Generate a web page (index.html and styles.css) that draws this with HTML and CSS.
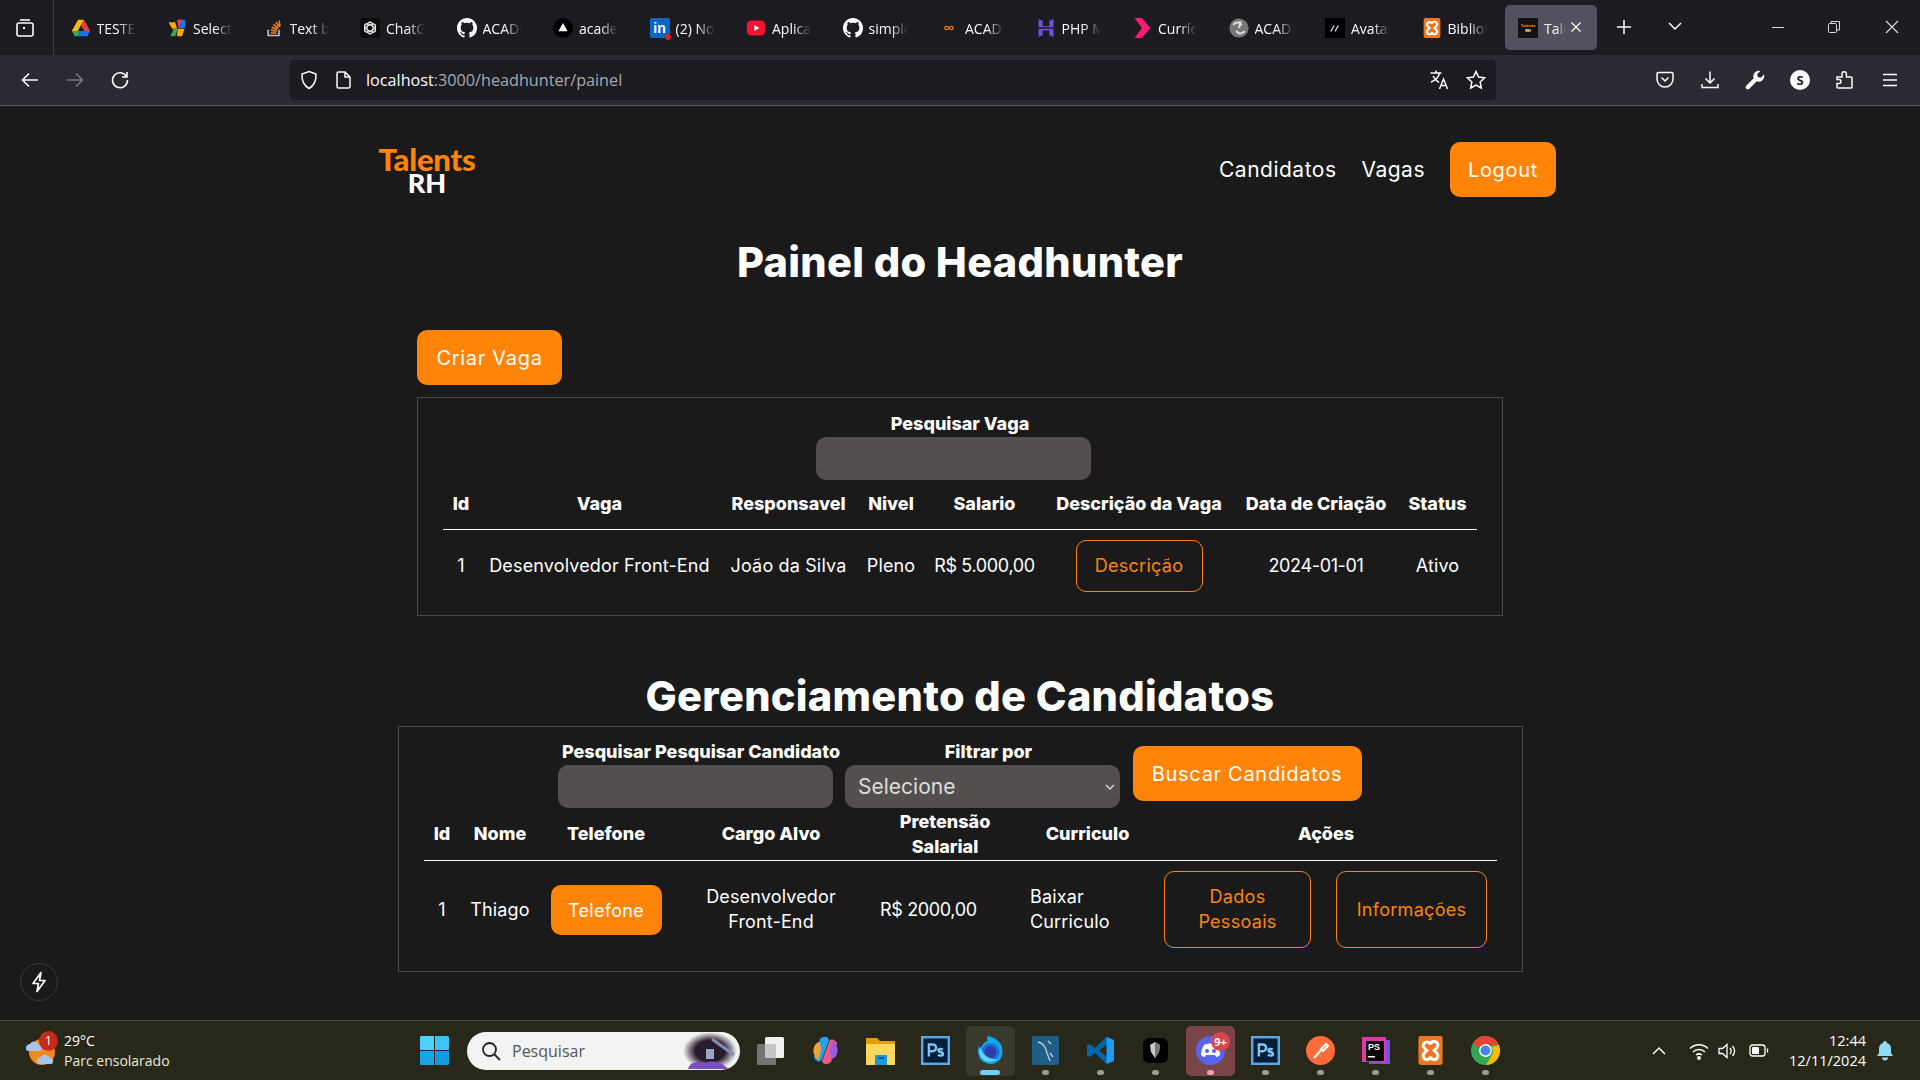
FILE: index.html
```html
<!DOCTYPE html>
<html lang="pt-BR">
<head>
<meta charset="utf-8">
<title>Talents RH</title>
<link rel="stylesheet" href="styles.css">
</head>
<body>
<svg class="sprite" xmlns="http://www.w3.org/2000/svg">
  <symbol id="gh" viewBox="0 0 16 16"><path fill="#fff" d="M8 0C3.58 0 0 3.58 0 8c0 3.54 2.29 6.53 5.47 7.59.4.07.55-.17.55-.38 0-.19-.01-.82-.01-1.49-2.01.37-2.53-.49-2.69-.94-.09-.23-.48-.94-.82-1.13-.28-.15-.68-.52-.01-.53.63-.01 1.08.58 1.23.82.72 1.21 1.87.87 2.33.66.07-.52.28-.87.51-1.07-1.78-.2-3.64-.89-3.64-3.95 0-.87.31-1.59.82-2.15-.08-.2-.36-1.02.08-2.12 0 0 .67-.21 2.2.82.64-.18 1.32-.27 2-.27s1.36.09 2 .27c1.53-1.04 2.2-.82 2.2-.82.44 1.1.16 1.92.08 2.12.51.56.82 1.27.82 2.15 0 3.07-1.87 3.75-3.65 3.95.29.25.54.73.54 1.48 0 1.07-.01 1.93-.01 2.2 0 .21.15.46.55.38A8.01 8.01 0 0 0 16 8c0-4.42-3.58-8-8-8z"/></symbol>
  <symbol id="ps" viewBox="0 0 24 24"><rect x="1" y="1" width="22" height="22" fill="#001e36" stroke="#5aa9e6" stroke-width="2"/><path fill="none" stroke="#7fc4f5" stroke-width="2" d="M6.5 17V7h3.2a2.7 2.7 0 0 1 0 5.6H6.5M18 11.3c-1-.8-3.6-.9-3.6.6 0 1.700 3.800 1 3.800 3 0 1.700-2.800 1.600-4.100.7"/></symbol>
</svg>

<header class="tabbar">
  <div class="tabmenu">
    <svg width="20" height="20" viewBox="0 0 20 20" fill="none" stroke="#fbfbfe" stroke-width="1.6"><rect x="2" y="5" width="16" height="13" rx="2"/><path d="M5 2h10"/><rect x="8" y="9" width="2" height="2" fill="#fbfbfe" stroke="none"/></svg>
  </div>
  <nav class="tabs">
    <div class="tab"><svg class="fav" viewBox="0 0 24 24"><path fill="#fbbc04" d="M8.500 2h7L8 15.500H1z"/><path fill="#1a73e8" d="M8 22l3.500-6.500H23L19.500 22z"/><path fill="#ea4335" d="M15.500 2L23 15.500h-7L12 9z"/><path fill="#34a853" d="M1 15.500L4.500 22H8l3.500-6.500z"/></svg><span class="tab-title">TESTE Drive</span></div>
    <div class="tab"><svg class="fav" viewBox="0 0 24 24"><path fill="#f9ab00" d="M2 5h8l2 8H6z"/><path fill="#1a73e8" d="M14 2h8v10h-8z"/><path fill="#ea4335" d="M12 2h6l-4 10z"/><path fill="#34a853" d="M4 22l4-9h5l-3 9z"/><path fill="#f9ab00" d="M13 13h8l-3 9h-6z"/></svg><span class="tab-title">Select box</span></div>
    <div class="tab"><svg class="fav" viewBox="0 0 24 24"><path fill="none" stroke="#bcbbbb" stroke-width="2" d="M5 14v7h13v-7"/><path fill="none" stroke="#f48024" stroke-width="2" d="M8 18h7M8.300 14.500l7 1.400M9.300 11l6.600 2.900M11.300 7.700l5.600 4.600M14.300 5l4.200 5.700M18 3l1.300 7"/></svg><span class="tab-title">Text box</span></div>
    <div class="tab"><svg class="fav" viewBox="0 0 24 24"><rect width="24" height="24" rx="4" fill="#0c0c0c"/><g fill="none" stroke="#eee" stroke-width="1.200"><circle cx="12" cy="12" r="6.500"/><ellipse cx="12" cy="12" rx="7.500" ry="3.500" transform="rotate(30 12 12)"/><ellipse cx="12" cy="12" rx="7.500" ry="3.500" transform="rotate(90 12 12)"/><ellipse cx="12" cy="12" rx="7.500" ry="3.500" transform="rotate(150 12 12)"/></g></svg><span class="tab-title">ChatGPT</span></div>
    <div class="tab"><svg class="fav"><use href="#gh"/></svg><span class="tab-title">ACADEMIA</span></div>
    <div class="tab"><svg class="fav" viewBox="0 0 24 24"><circle cx="12" cy="12" r="12" fill="#000"/><path fill="#fff" d="M12 6l5.500 10h-11z"/></svg><span class="tab-title">academia</span></div>
    <div class="tab"><span class="fav li">in<i></i></span><span class="tab-title">(2) Notif</span></div>
    <div class="tab"><svg class="fav" viewBox="0 0 24 24"><rect x="1" y="3" width="22" height="18" rx="5" fill="#f5132f"/><path fill="#fff" d="M10 8.500l6 3.500-6 3.500z"/></svg><span class="tab-title">Aplicativo</span></div>
    <div class="tab"><svg class="fav"><use href="#gh"/></svg><span class="tab-title">simple</span></div>
    <div class="tab"><svg class="fav" viewBox="0 0 24 24"><path fill="none" stroke="#e8771c" stroke-width="1.600" d="M12 12c-1.200-2.500-5-2.500-5 0s3.800 2.500 5 0 5-2.500 5 0-3.800 2.500-5 0"/></svg><span class="tab-title">ACADEMIA</span></div>
    <div class="tab"><svg class="fav" viewBox="0 0 24 24"><path fill="#6f4fdc" d="M3 1l5 2.500V10h8V3.500L21 1v10H3zM3 13h18v10l-5-2.500V15H8v5.500L3 23z"/></svg><span class="tab-title">PHP Manual</span></div>
    <div class="tab"><svg class="fav" viewBox="0 0 24 24"><path fill="#ff1a75" d="M3 0h9l10 12-10 12H3l9-12z"/></svg><span class="tab-title">Currículo</span></div>
    <div class="tab"><svg class="fav" viewBox="0 0 24 24"><circle cx="12" cy="12" r="11.500" fill="#777"/><path fill="none" stroke="#ddd" stroke-width="2.500" d="M5 8c4-4 9-3 10 1M19 16c-4 4-9 3-10-1M12 12l2-8"/></svg><span class="tab-title">ACADEMIA</span></div>
    <div class="tab"><svg class="fav" viewBox="0 0 24 24"><rect width="24" height="24" fill="#000"/><path stroke="#ddd" stroke-width="1.500" d="M7 16l4-7M12 16l4-7"/></svg><span class="tab-title">Avatares</span></div>
    <div class="tab"><svg class="fav" viewBox="0 0 24 24"><rect x="2" width="20" height="24" rx="2" fill="#f0761f"/><path fill="none" stroke="#fff" stroke-width="2.500" d="M9 5a3 3 0 0 0-3 3c0 2 2 3 3 4-1 1-3 2-3 4a3 3 0 0 0 6 1 3 3 0 0 0 6-1c0-2-2-3-3-4 1-1 3-2 3-4a3 3 0 0 0-6-1 3 3 0 0 0-3-2z"/></svg><span class="tab-title">Biblioteca</span></div>
    <div class="tab active"><span class="fav mini"><b>Talents</b><b>RH</b></span><span class="tab-title short">Talents</span>
      <svg class="tab-x" width="12" height="12" viewBox="0 0 12 12" stroke="#fbfbfe" stroke-width="1.300"><path d="M1.500 1.500l9 9M10.500 1.500l-9 9"/></svg></div>
  </nav>
  <svg class="newtab" width="16" height="16" viewBox="0 0 16 16" stroke="#fbfbfe" stroke-width="1.500"><path d="M8 1v14M1 8h14"/></svg>
  <svg class="alltabs" width="14" height="9" viewBox="0 0 14 9" fill="none" stroke="#fbfbfe" stroke-width="1.500"><path d="M1 1l6 6 6-6"/></svg>
  <div class="winctl">
    <svg width="12" height="12" viewBox="0 0 12 12" stroke="#ddd"><path d="M0 6.500h12"/></svg>
    <svg width="12" height="12" viewBox="0 0 12 12" fill="none" stroke="#ddd"><rect x=".5" y="2.500" width="8" height="9" rx="1"/><path d="M3 2.500V.5h8.500v8.500H8.500"/></svg>
    <svg width="14" height="14" viewBox="0 0 14 14" stroke="#ddd" stroke-width="1.100"><path d="M1 1l12 12M13 1L1 13"/></svg>
  </div>
</header>

<div class="toolbar">
  <div class="navbtns">
    <svg width="20" height="20" viewBox="0 0 20 20" fill="none" stroke="#fbfbfe" stroke-width="1.600"><path d="M18 10H3M9 3.500L2.500 10 9 16.500"/></svg>
    <svg width="20" height="20" viewBox="0 0 20 20" fill="none" stroke="#77767c" stroke-width="1.600"><path d="M2 10h15M11 3.500l6.500 6.500-6.500 6.500"/></svg>
    <svg width="20" height="20" viewBox="0 0 20 20" fill="none" stroke="#fbfbfe" stroke-width="1.600"><path d="M16.500 6.500A7.500 7.500 0 1 0 17.500 10M17 2v5h-5"/></svg>
  </div>
  <div class="urlbar">
    <svg class="url-shield" width="18" height="20" viewBox="0 0 18 20" fill="none" stroke="#fbfbfe" stroke-width="1.500"><path d="M9 1.500l7 2.500c.3 6.500-1.500 11.500-7 14.500C3.500 15.500 1.700 10.500 2 4z"/></svg>
    <svg width="15" height="18" viewBox="0 0 15 18" fill="none" stroke="#fbfbfe" stroke-width="1.500"><path d="M2.500 1h6.500l5 5v9.500a1.500 1.500 0 0 1-1.500 1.500h-10A1.500 1.500 0 0 1 1 15.500v-13A1.500 1.500 0 0 1 2.500 1zM9 1v5h5"/></svg>
    <span class="url"><span class="url-host">localhost</span>:3000/headhunter/painel</span>
    <svg class="url-end" width="22" height="22" viewBox="0 0 22 22" fill="none" stroke="#fbfbfe" stroke-width="1.500"><path d="M1.500 4h11M7 1.500V4M10.500 4C9.500 8.500 6 11.500 2 13M4 7c1.500 3 3.500 5 6 6.500M10.500 20l4-10 4 10M12 16.500h5"/></svg>
    <svg width="20" height="20" viewBox="0 0 20 20" fill="none" stroke="#fbfbfe" stroke-width="1.500"><path d="M10 1.500l2.600 5.500 6 .8-4.400 4.200 1.100 6L10 15.100 4.700 18l1.100-6L1.400 7.800l6-.8z"/></svg>
  </div>
  <div class="tools">
    <svg width="20" height="20" viewBox="0 0 20 20" fill="none" stroke="#fbfbfe" stroke-width="1.500"><path d="M3.500 2.500h13A1.500 1.500 0 0 1 18 4v5a8 8 0 0 1-16 0V4a1.500 1.500 0 0 1 1.500-1.500zM6.500 7.500L10 11l3.500-3.500"/></svg>
    <svg width="20" height="20" viewBox="0 0 20 20" fill="none" stroke="#fbfbfe" stroke-width="1.500"><path d="M10 1.500V13M5.500 8.500L10 13l4.500-4.500M2 14v3.500h16V14"/></svg>
    <svg width="20" height="20" viewBox="0 0 20 20" fill="#fbfbfe"><path d="M19 4.500l-3.200 3.200-3-.6-.6-3L15.500 1a5.500 5.500 0 0 0-6.800 7.200L1.200 15.700a2.200 2.200 0 0 0 3.100 3.100l7.500-7.500A5.500 5.500 0 0 0 19 4.500z"/></svg>
    <span class="s-badge">S</span>
    <svg width="20" height="20" viewBox="0 0 20 20" fill="none" stroke="#fbfbfe" stroke-width="1.500"><path d="M2 7h5V4a2.200 2.200 0 0 1 4.400 0v3H16a1 1 0 0 1 1 1v9a1 1 0 0 1-1 1H3a1 1 0 0 1-1-1v-3.500h2a2 2 0 0 0 0-4H2z"/></svg>
    <svg width="20" height="20" viewBox="0 0 20 20" stroke="#fbfbfe" stroke-width="1.600"><path d="M3 4.500h14M3 10h14M3 15.500h14"/></svg>
  </div>
</div>

<main class="page">
  <div class="site-head">
    <div class="logo"><span class="logo-a">Talents</span><span class="logo-b">RH</span></div>
    <nav class="site-nav">
      <a class="site-link">Candidatos</a>
      <a class="site-link">Vagas</a>
      <button class="btn btn-logout">Logout</button>
    </nav>
  </div>

  <h1 class="title">Painel do Headhunter</h1>

  <section class="sec-vagas">
    <button class="btn btn-criar">Criar Vaga</button>
    <div class="box box-vagas">
      <div class="search-one">
        <label class="lbl">Pesquisar Vaga</label>
        <div class="field field-vaga"></div>
      </div>
      <table class="grid grid-vagas">
        <colgroup><col class="v1"><col class="v2"><col class="v3"><col class="v4"><col class="v5"><col class="v6"><col class="v7"><col class="v8"></colgroup>
        <thead><tr><th>Id</th><th>Vaga</th><th>Responsavel</th><th>Nivel</th><th>Salario</th><th>Descrição da Vaga</th><th>Data de Criação</th><th>Status</th></tr></thead>
        <tbody><tr><td>1</td><td>Desenvolvedor Front-End</td><td>João da Silva</td><td>Pleno</td><td class="num">R$ 5.000,00</td><td><button class="btn-out btn-desc">Descrição</button></td><td class="num">2024-01-01</td><td>Ativo</td></tr></tbody>
      </table>
    </div>
  </section>

  <h2 class="title title-2">Gerenciamento de Candidatos</h2>

  <section class="box box-cand">
    <div class="search-row">
      <div class="search-col">
        <label class="lbl">Pesquisar Pesquisar Candidato</label>
        <div class="field"></div>
      </div>
      <div class="search-col">
        <label class="lbl">Filtrar por</label>
        <div class="field field-select"><span>Selecione</span>
          <svg width="10" height="6" viewBox="0 0 10 6" fill="none" stroke="#ddd" stroke-width="1.400"><path d="M1 1l4 4 4-4"/></svg></div>
      </div>
      <button class="btn btn-buscar">Buscar Candidatos</button>
    </div>
    <table class="grid grid-cand">
      <colgroup><col class="c1"><col class="c2"><col class="c3"><col class="c4"><col class="c5"><col class="c6"><col class="c7"><col class="c8"></colgroup>
      <thead><tr><th>Id</th><th>Nome</th><th>Telefone</th><th>Cargo Alvo</th><th>Pretensão<br>Salarial</th><th>Curriculo</th><th colspan="2">Ações</th></tr></thead>
      <tbody><tr><td>1</td><td>Thiago</td><td><button class="btn btn-tel">Telefone</button></td><td>Desenvolvedor<br>Front-End</td><td class="left num">R$ 2000,00</td><td class="left">Baixar<br>Curriculo</td><td><button class="btn-out btn-dados">Dados<br>Pessoais</button></td><td><button class="btn-out btn-info">Informações</button></td></tr></tbody>
    </table>
  </section>

  <button class="bolt" aria-label="Dev tools">
    <svg width="18" height="22" viewBox="0 0 18 22" fill="none" stroke="#fff" stroke-width="1.700" stroke-linejoin="round"><path d="M11 1.500L3 12.500h5.500L7 20.500l8-11H9.500z"/></svg>
  </button>
</main>

<footer class="taskbar">
  <div class="tb-left">
    <div class="weather">
      <svg width="34" height="36" viewBox="0 0 34 36"><circle cx="18" cy="20" r="13" fill="#f08a1d"/><path fill="#a9c4ee" d="M2 17a4 4 0 0 1 4-5 5 5 0 0 1 9 1 3 3 0 0 1 0 6H4a2 2 0 0 1-2-2z"/><path fill="#a9c4ee" d="M13 30a4 4 0 0 1 4-5 5 5 0 0 1 9 1 3 3 0 0 1 3 4 2 2 0 0 1-2 2H15a2 2 0 0 1-2-2z"/></svg>
      <span class="w-badge">1</span>
    </div>
    <div class="w-text"><span>29°C</span><span class="w-sub">Parc ensolarado</span></div>
  </div>
  <div class="tb-center">
    <svg class="ti" viewBox="0 0 29 29"><path fill="#4dd0fb" d="M0 1.500A1.500 1.500 0 0 1 1.500 0H14v14H0z"/><path fill="#3cc4f7" d="M15 0h12.500A1.500 1.500 0 0 1 29 1.500V14H15z"/><path fill="#1aa5e8" d="M0 15h14v14H1.500A1.500 1.500 0 0 1 0 27.500z"/><path fill="#129ae0" d="M15 15h14v12.500a1.500 1.500 0 0 1-1.500 1.500H15z"/></svg>
    <div class="tsearch">
      <svg width="20" height="20" viewBox="0 0 20 20" fill="none" stroke="#222" stroke-width="1.800"><circle cx="8.500" cy="8.500" r="6.500"/><path d="M13.500 13.500L19 19"/></svg>
      <span>Pesquisar</span>
      <svg class="ts-art" width="56" height="36" viewBox="0 0 56 36"><defs><radialGradient id="ga"><stop offset=".55" stop-color="#2a1a2e"/><stop offset="1" stop-color="#f3f3f1"/></radialGradient></defs><ellipse cx="28" cy="18" rx="27" ry="19" fill="url(#ga)"/><path stroke="#7f8fb5" stroke-width="3" d="M30 6l22 16"/><path fill="#7b4fc0" d="M6 36c2-7 10-8 16-6 6-3 18-2 24 6z"/><rect x="24" y="16" width="8" height="10" fill="#9aa6c4"/></svg>
    </div>
    <svg class="ti" viewBox="0 0 29 29"><rect x="9" y="1" width="19" height="21" rx="1.500" fill="#f1f1f1"/><rect x="1" y="8" width="19" height="21" rx="1.500" fill="#7c7c7c" opacity=".9"/><rect x="9" y="8" width="11" height="14" fill="#c4c4c4"/></svg>
    <svg class="ti" viewBox="0 0 29 29"><path fill="#1fa6e8" d="M9 3c3-3 8-3 9 1l-7 19c-1 4-7 3-8-2z"/><path fill="#f0a33a" d="M4 20c-4-6 0-14 5-14l1 8-2 9c-1 1-3 0-4-3z"/><path fill="#e85a8e" d="M20 26c-3 3-8 3-9-1l7-19c1-4 7-3 8 2z"/><path fill="#9c5be3" d="M25 9c4 6 0 14-5 14l-1-8 2-9c1-1 3 0 4 3z"/></svg>
    <svg class="ti" viewBox="0 0 29 29"><path fill="#e0a100" d="M0 2h11l3 3h15v6H0z"/><path fill="#ffd75e" d="M0 8h29v21H0z"/><rect x="9" y="19" width="12" height="10" fill="#1a9ad8"/><rect x="12" y="21" width="6" height="2" fill="#0c5f90"/></svg>
    <svg class="ti"><use href="#ps"/></svg>
    <div class="tslot run"><svg class="ti" viewBox="0 0 29 29"><path fill="#12a8ee" d="M3 9c0 2 .5 3 1.500 4 1-4 4-7 7-8C11 3.500 11 2 11.500 0c7 1 15 6 15 15 0 8-5.500 13-12 13S2 23 2 15c0-2 .3-4 1-6z"/><circle cx="14.500" cy="16" r="9" fill="#1e6fd8"/><circle cx="14.500" cy="16" r="6" fill="#2b3fa8"/><path fill="#5fd5fa" d="M4 11c3 8 9 13 17 12-4 4-12 4-16-2-2-3-2-7-1-10z"/></svg><i class="dot dot-blue"></i></div>
    <div class="tslot"><svg class="ti" viewBox="0 0 29 29"><rect x="1" width="27" height="29" rx="2" fill="#1f5f85"/><path fill="none" stroke="#bcd" stroke-width="1.300" d="M7 6c5 1 8 6 9 11l3 8M17 5l3 3M19 17l3 4"/></svg><i class="dot"></i></div>
    <div class="tslot"><svg class="ti" viewBox="0 0 29 29"><path fill="#0065a9" d="M20.500 1L9 12 3.500 8 1 9.500v10L3.500 21 9 17l11.500 11 7.500-3V4zM21 8.500v12L13 14.500z"/><path fill="#1f9cf0" d="M20.500 1L28 4v21l-7.500 3z"/></svg><i class="dot"></i></div>
    <div class="tslot"><svg class="ti" viewBox="0 0 29 29"><rect x="2" y="2" width="25" height="25" rx="6" fill="#000"/><path fill="#ccc" d="M9 9l5-3 5 3-1 7-4 6-4-6z"/><path fill="#777" d="M14 6l5 3-1 7-4 6z"/></svg><i class="dot"></i></div>
    <div class="tslot run-red"><svg class="ti" viewBox="0 0 29 29"><circle cx="14.500" cy="14.500" r="14.500" fill="#5865f2"/><path fill="#fff" d="M8 9c4-2 9-2 13 0 2 3 3 7 3 10-1 1-3 2-4 2l-1-2h-9l-1 2c-1 0-3-1-4-2 0-3 1-7 3-10z"/><circle cx="11" cy="15" r="2" fill="#5865f2"/><circle cx="18" cy="15" r="2" fill="#5865f2"/></svg><span class="d-badge">9+</span><i class="dot dot-pink"></i></div>
    <div class="tslot"><svg class="ti"><use href="#ps"/></svg><i class="dot"></i></div>
    <div class="tslot"><svg class="ti" viewBox="0 0 29 29"><circle cx="14.500" cy="14.500" r="14.500" fill="#ff6c37"/><path fill="none" stroke="#fff" stroke-width="2" d="M8 22l8-9M15 13l5-5 2 2-5 5z"/></svg><i class="dot"></i></div>
    <div class="tslot"><svg class="ti" viewBox="0 0 29 29"><rect x="8" y="4" width="21" height="24" fill="#7b4fe3"/><rect x="1" y="1" width="24" height="25" fill="#e535ab"/><rect x="5" y="5" width="18" height="20" fill="#000"/><text class="pstext" x="7" y="14">PS</text><rect x="7" y="20" width="7" height="1.500" fill="#fff"/></svg><i class="dot"></i></div>
    <div class="tslot"><svg class="ti" viewBox="0 0 24 24"><rect x="2" width="20" height="24" rx="2" fill="#f0761f"/><path fill="none" stroke="#fff" stroke-width="2.500" d="M9 5a3 3 0 0 0-3 3c0 2 2 3 3 4-1 1-3 2-3 4a3 3 0 0 0 6 1 3 3 0 0 0 6-1c0-2-2-3-3-4 1-1 3-2 3-4a3 3 0 0 0-6-1 3 3 0 0 0-3-2z"/></svg><i class="dot"></i></div>
    <div class="tslot"><svg class="ti" viewBox="0 0 29 29"><circle cx="14.500" cy="14.500" r="14.500" fill="#34a853"/><path fill="#ea4335" d="M2 7.500A14.500 14.500 0 0 1 28 9H14.500a6 6 0 0 0-6 3z"/><path fill="#fbbc04" d="M28 9a14.500 14.500 0 0 1-13 20l6-10a6 6 0 0 0-1-8z"/><circle cx="14.500" cy="14.500" r="6.500" fill="#fff"/><circle cx="14.500" cy="14.500" r="5" fill="#4285f4"/></svg><i class="dot"></i></div>
  </div>
  <div class="tb-right">
    <svg width="14" height="9" viewBox="0 0 14 9" fill="none" stroke="#fff" stroke-width="1.500"><path d="M1 8l6-6 6 6"/></svg>
    <svg class="tr-wifi" width="20" height="18" viewBox="0 0 20 18" fill="none" stroke="#fff" stroke-width="1.500"><path d="M1 6.500c5-5 13-5 18 0M4 10c3.500-3.500 8.500-3.500 12 0M7 13c2-1.500 4-1.500 6 0"/><circle cx="10" cy="16" r="1.200" fill="#fff"/></svg>
    <svg class="tr-sound" width="20" height="16" viewBox="0 0 20 16" fill="none" stroke="#fff" stroke-width="1.300"><path d="M1 5.500h3.500L9 1.500v13L4.500 10.500H1zM12 5c1.500 2 1.500 4 0 6M14.500 3c2.500 3 2.500 7 0 10"/></svg>
    <svg class="tr-batt" width="20" height="13" viewBox="0 0 20 13" fill="none" stroke="#fff" stroke-width="1.300"><rect x="1" y="1" width="15" height="11" rx="2.500"/><rect x="3" y="3" width="7" height="7" rx="1" fill="#fff" stroke="none"/><path d="M18.500 4.500v4"/></svg>
    <div class="clock"><span>12:44</span><span>12/11/2024</span></div>
    <svg class="tr-bell" width="18" height="20" viewBox="0 0 18 20" fill="#8fdcf8"><path d="M9 0a2 2 0 0 1 2 2c3 1 4 3 4 6v4l2 3H1l2-3V8c0-3 1-5 4-6a2 2 0 0 1 2-2zM6 16.500h6a3 3 0 0 1-6 0z"/></svg>
  </div>
</footer>
</body>
</html>
```

FILE: styles.css
```css
* { box-sizing: border-box; }
html, body { margin: 0; height: 100%; }
body {
  width: 1920px; height: 1080px; overflow: hidden;
  display: flex; flex-direction: column;
  background: #1a1a1a; color: #fff;
  font-family: Inter, "Noto Sans", sans-serif;
}
.sprite { display: none; }

/* browser chrome */
.tabbar { height: 55px; flex: none; background: #1c1b22; display: flex; align-items: flex-start; font-family: "Open Sans", sans-serif; }
.tabmenu { width: 54px; height: 55px; border-right: 1px solid #3e3d45; display: flex; align-items: center; justify-content: center; padding-right: 4px; flex: none; }
.tabs { display: flex; padding-left: 1.25px; padding-top: 5px; flex: none; }
.tab { width: 92px; height: 45px; margin: 0 2.25px; padding: 1px 0 0 13px; border-radius: 5px; display: flex; align-items: center; gap: 6px; font-size: 14px; color: #fbfbfe; position: relative; flex: none; }
.tab.active { background: #52525e; }
.fav { width: 20px; height: 20px; flex: none; }
.tab-title { width: 39px; overflow: hidden; white-space: nowrap; -webkit-mask-image: linear-gradient(90deg, #000 55%, transparent); mask-image: linear-gradient(90deg, #000 55%, transparent); }
.tab-title.short { width: 22px; }
.tab-x { position: absolute; right: 15px; top: 16px; }
.li { background: #0a66c2; border-radius: 2px; color: #fff; font: 700 14px/20px "Liberation Sans", sans-serif; text-align: center; position: relative; }
.li i { position: absolute; width: 6px; height: 6px; border-radius: 3px; background: #e02020; right: -1px; bottom: -2px; }
.mini { background: #111; display: flex; flex-direction: column; align-items: center; justify-content: center; }
.mini b { font-size: 4px; line-height: 5px; color: #ff8408; }
.mini b + b { color: #fff; }
.newtab { margin: 19px 0 0 16.500px; flex: none; }
.alltabs { margin: 22px 0 0 36px; flex: none; }
.winctl { margin: 15px 0 0 90px; display: flex; align-items: center; width: 127px; justify-content: space-between; flex: none; height: 24px; }

.toolbar { height: 51px; flex: none; background: #2b2a33; border-bottom: 1px solid #5c5c62; display: flex; align-items: center; }
.navbtns { width: 289px; padding-left: 20px; display: flex; gap: 25px; flex: none; }
.urlbar { width: 1207px; height: 40px; flex: none; background: #1c1b22; border-radius: 5px; display: flex; align-items: center; padding: 0 10px 0 11px; gap: 15px; }
.url-shield { margin-right: 3px; }
.url { font: 16.200px "Open Sans", sans-serif; color: #a9a9ad; flex: 1; }
.url-host { color: #fbfbfe; }
.tools { margin-left: 159px; display: flex; align-items: center; gap: 25px; }
.s-badge { width: 20px; height: 20px; border-radius: 50%; background: #fbfbfe; color: #1c1b22; font: 700 13px/20px "Open Sans", sans-serif; text-align: center; }

/* page */
.page { flex: 1; position: relative; overflow: hidden; background: #1a1a1a; min-height: 0; }
.site-head { margin: 36px 0 0 378px; width: 1178px; height: 55px; display: flex; align-items: center; justify-content: space-between; }
.logo { display: flex; flex-direction: column; align-items: center; width: 98px; font-family: Lato, sans-serif; line-height: 24px; margin-top: 3px; }
.logo-a { color: #ff8408; font-weight: 900; font-size: 31px; letter-spacing: -.2px; }
.logo-b { color: #fff; font-weight: 900; font-size: 27px; }
.site-nav { display: flex; align-items: center; }
.site-link { font-size: 21px; margin-right: 25px; letter-spacing: .5px; }
.btn { background: #ff8408; color: #fff; border: 0; border-radius: 10px; font-family: inherit; font-size: 20px; letter-spacing: .7px; height: 55px; padding: 0; }
.btn-logout { width: 106px; }
.title { margin: 35px 0 0; text-align: center; font-size: 41.500px; line-height: 60px; font-weight: 800; letter-spacing: .3px; }
.sec-vagas { width: 1086px; margin: 38px auto 0; }
.btn-criar { width: 145px; display: block; }
.box { border: 1px solid #4a4a4a; }
.box-vagas { margin-top: 12px; height: 219px; padding: 12px 25px 0; }
.search-one { display: flex; flex-direction: column; align-items: center; }
.lbl { font-size: 18px; font-weight: 800; line-height: 27px; height: 27px; white-space: nowrap; display: block; text-align: center; }
.field { width: 275px; height: 43px; background: #544f4e; border-radius: 10px; flex: none; }
.field-vaga { margin-right: 13px; }
.grid { table-layout: fixed; border-collapse: collapse; }
.grid th { font-size: 18px; font-weight: 800; line-height: 25px; padding: 0; border-bottom: 1px solid #fff; text-align: center; }
.grid td { font-size: 18px; line-height: 25px; padding: 10px 0; text-align: center; letter-spacing: .15px; }
.grid td.num { letter-spacing: -.35px; }
.grid td.left { text-align: left; padding-left: 10px; }
.grid-vagas { width: 1034px; }
.grid-vagas th { height: 49px; padding-bottom: 2px; }
.v1 { width: 36px; } .v2 { width: 241px; } .v3 { width: 137px; } .v4 { width: 68px; } .v5 { width: 119px; } .v6 { width: 190px; } .v7 { width: 164px; } .v8 { width: 79px; }
.btn-out { background: transparent; border: 1px solid #ff8408; border-radius: 10px; color: #ff8408; font-family: inherit; font-size: 18px; line-height: 25px; letter-spacing: .3px; padding: 0; }
.btn-desc { width: 127px; height: 52px; }

.title-2 { margin-top: 50px; }
.box-cand { width: 1125px; margin: 0 0 0 398px; height: 246px; padding: 12px 25px 0; }
.search-row { display: flex; justify-content: center; align-items: center; gap: 12.500px; margin-left: -2px; }
.search-col { width: 275px; display: flex; flex-direction: column; align-items: center; }
.search-col .lbl { width: 275px; height: 26px; line-height: 26px; display: flex; justify-content: center; padding-left: 12px; }
.field-select { display: flex; align-items: center; justify-content: space-between; padding: 0 5px 0 13px; color: #ddd; font-size: 21px; }
.btn-buscar { width: 229px; }
.grid-cand { width: 1073px; }
.grid-cand th { height: 52px; }
.c1 { width: 36px; } .c2 { width: 80px; } .c3 { width: 132px; } .c4 { width: 198px; } .c5 { width: 150px; } .c6 { width: 135px; } .c7 { width: 168px; } .c8 { width: 174px; }
.btn-tel { width: 111px; height: 50px; font-size: 18px; letter-spacing: .3px; display: block; margin: 2px auto 0; }
.btn-dados { width: 147px; height: 77px; display: block; margin-left: 9px; }
.btn-info { width: 151px; height: 77px; display: block; margin-left: 13px; }
.bolt { position: absolute; left: 20px; bottom: 19px; width: 38px; height: 38px; border-radius: 50%; background: #1a1a1a; border: 1px solid #3a3a3a; display: flex; align-items: center; justify-content: center; padding: 0; }

/* taskbar */
.taskbar { height: 60px; flex: none; background: #28281a; border-top: 1px solid #4b4b3c; display: grid; grid-template-columns: 1fr auto 1fr; align-items: center; font-family: "Open Sans", sans-serif; color: #fff; }
.tb-left { display: flex; align-items: center; padding-left: 24px; gap: 7px; }
.weather { position: relative; width: 33px; height: 38px; }
.w-badge { position: absolute; left: 15px; top: -1px; width: 19px; height: 20px; border-radius: 50%; background: #c42b1c; font-size: 12px; line-height: 20px; text-align: center; }
.w-text { display: flex; flex-direction: column; font-size: 14px; line-height: 20px; }
.w-sub { color: #e8e8de; }
.tb-center { display: flex; align-items: center; gap: 26px; height: 59px; }
.ti { width: 29px; height: 29px; display: block; flex: none; }
.tsearch { width: 273px; height: 38px; margin: 0 -10px 0 -8px; border-radius: 19px; background: #f3f3f1; display: flex; align-items: center; padding: 0 0 0 14px; gap: 11px; color: #555; font-size: 16px; position: relative; }
.ts-art { position: absolute; right: 2px; top: 1px; }
.tslot { position: relative; width: 29px; height: 50px; display: flex; align-items: center; justify-content: center; }
.tslot.run::before, .tslot.run-red::before { content: ""; position: absolute; left: -10px; right: -10px; top: 0; bottom: 0; border-radius: 5px; background: #3a3a2c; }
.tslot.run-red::before { background: #7a4549; }
.tslot .ti { position: relative; }
.dot { position: absolute; bottom: 1px; left: 11px; width: 7px; height: 5px; border-radius: 3px; background: #9b9b92; }
.dot-blue { left: 4px; width: 20px; background: #6fd0f7; }
.dot-pink { background: #f5a0a8; }
.d-badge { position: absolute; left: 15px; top: 6px; width: 19px; height: 19px; border-radius: 50%; background: #d8474c; font-size: 11px; font-weight: 700; line-height: 19px; text-align: center; }
.pstext { font: 700 9px "Liberation Sans", sans-serif; fill: #fff; }
.tb-right { display: flex; align-items: center; justify-content: flex-end; padding-right: 26px; }
.tr-wifi { margin-left: 23px; }
.tr-sound { margin-left: 9px; }
.tr-batt { margin-left: 11px; }
.clock { display: flex; flex-direction: column; align-items: flex-end; font-size: 14.500px; line-height: 20px; margin-left: 20px; }
.tr-bell { margin-left: 10px; }
```
